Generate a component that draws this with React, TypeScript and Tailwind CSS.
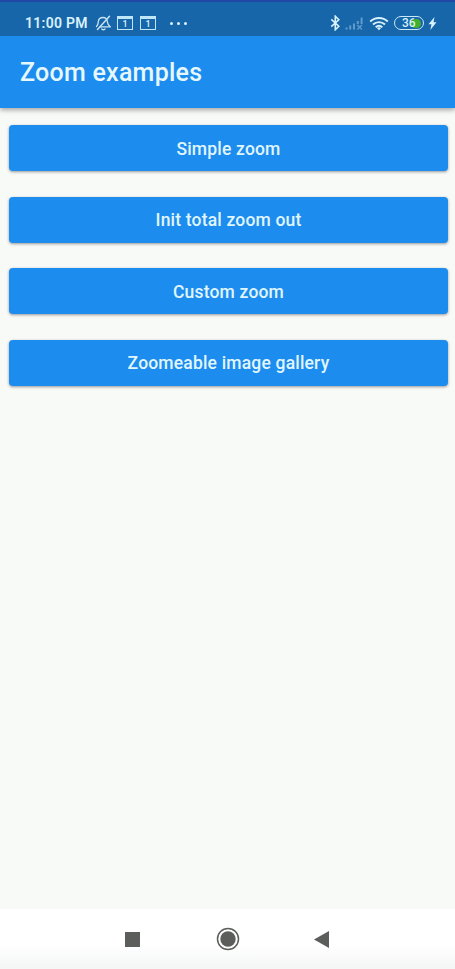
import React from "react";

const examples = [
  "Simple zoom",
  "Init total zoom out",
  "Custom zoom",
  "Zoomeable image gallery",
];

function BellOff() {
  return (
    <svg className="ml-[6px] h-4 w-[17px] opacity-90" viewBox="0 0 17 16" fill="none" stroke="currentColor" strokeWidth="1.3" strokeLinecap="round" strokeLinejoin="round">
      <path d="M1.500 11.500c1.800-1.400 1.600-3 1.800-5C3.600 4 5.500 2.500 8 2.500s4 1.700 4.300 4c.3 2.200.3 3.600 3 5.300H5" />
      <path d="M6.800 14c.9.900 2.300.900 3.200 0" />
      <path d="M14.500 1.200 2.500 14.500" strokeWidth="1.500" />
    </svg>
  );
}

function CalendarIcon() {
  return (
    <span className="flex h-[14px] w-4 items-center justify-center border border-t-[3px] border-[#bfe6f8] text-[9px] leading-none font-medium">
      1
    </span>
  );
}

function Bluetooth() {
  return (
    <svg className="h-4 w-[11px]" viewBox="0 0 11 16" fill="none" stroke="currentColor" strokeWidth="1.6">
      <path d="m1.300 4.300 7.500 6.900-3.500 3.500V1.300l3.500 3.500-7.500 6.900" />
    </svg>
  );
}

function Signal() {
  return (
    <svg className="ml-1 h-[15px] w-[19px] text-[#5f9ccb]" viewBox="0 0 19 15" fill="currentColor">
      <path d="M.5 11.500h2v2h-2zM4.200 9.500h2v4h-2zM8 7.500h2v6H8zM11.800 5h2v3h-2zM15.600 1.500h2v6.500h-2z" />
      <path d="m12.300 9 4.700 4.500m0-4.500-4.700 4.500" stroke="currentColor" strokeWidth="1.400" />
    </svg>
  );
}

function Wifi() {
  return (
    <svg className="ml-[5px] h-[15px] w-[20px]" viewBox="0 0 20 15" fill="none" stroke="currentColor" strokeWidth="1.900">
      <path d="M1.200 5.500c5-4.700 12.600-4.700 17.600 0M4 8.500c3.500-3.200 8.500-3.200 12 0M6.700 11.200c1.900-1.700 4.700-1.700 6.600 0" />
      <path d="m7.900 12 2.100 2.200L12.100 12c-1.200-1-3-1-4.200 0z" fill="currentColor" stroke="none" />
    </svg>
  );
}

function Battery() {
  return (
    <span className="ml-[5px] flex h-[14px] w-[30px] items-center rounded-full border-[1.5px] border-[#c9e8fa] p-px">
      <span className="relative flex h-full w-full items-center justify-end pr-px">
        <span className="h-[9px] w-[10px] rounded-full bg-[#43b02c]" />
        <span className="absolute left-[6px] text-[12px] leading-none font-medium">36</span>
      </span>
    </span>
  );
}

export default function App() {
  return (
    <div className="flex h-[969px] w-[455px] flex-col overflow-hidden bg-[#f8faf8] font-['Roboto',sans-serif]">
      <header className="z-10 bg-[#1c8cee] shadow-[0_2px_5px_rgba(0,0,0,0.35)]">
        <div className="flex h-9 items-center justify-between border-t-2 border-[#2148a4] bg-[#1866aa] pt-[8px] pr-[18px] pl-[25px] text-[#d9f2fc]">
          <div className="flex items-center">
            <span className="w-[64px] text-[14px] leading-4 font-semibold tracking-[0.3px] whitespace-nowrap">11:00 PM</span>
            <BellOff />
            <span className="ml-[5px] flex gap-[7px]">
              <CalendarIcon />
              <CalendarIcon />
            </span>
            <span className="ml-[14px] flex gap-1">
              <i className="size-[3px] rounded-full bg-current" />
              <i className="size-[3px] rounded-full bg-current" />
              <i className="size-[3px] rounded-full bg-current" />
            </span>
          </div>
          <div className="flex items-center">
            <Bluetooth />
            <Signal />
            <Wifi />
            <Battery />
            <svg className="ml-[4px] h-[13px] w-[9px]" viewBox="0 0 9 13" fill="currentColor">
              <path d="M6.500 0 .5 7.300h3L2.300 13 8.500 5.300h-3z" />
            </svg>
          </div>
        </div>
        <h1 className="flex h-[72px] items-center pt-0.5 pl-[20px] text-[25px] font-medium tracking-[0.25px] text-[#e6f8fd]">Zoom examples</h1>
      </header>

      <main className="flex flex-1 flex-col gap-[25.500px] pt-[17px] pr-[7px] pl-[9px]">
        {examples.map((label) => (
          <button
            key={label}
            className="flex h-[46px] shrink-0 items-center justify-center rounded-[4px] bg-[#1c8cee] pt-[2px] text-[17.500px] font-medium tracking-[0.18px] text-[#e0f6fd] shadow-[0_1px_3px_rgba(0,0,0,0.4)]"
          >
            {label}
          </button>
        ))}
      </main>

      <nav className="flex h-[60px] items-center bg-linear-to-b from-[#fefffe] from-60% to-[#f4f6f5] pl-[125px] text-[#5c5e5b]">
        <span className="size-[15px] bg-current" />
        <svg className="ml-[76px] size-6" viewBox="0 0 24 24" fill="none" stroke="currentColor">
          <circle cx="12" cy="12" r="10.500" strokeWidth="1.500" />
          <circle cx="12" cy="12" r="7.700" fill="currentColor" stroke="none" />
        </svg>
        <svg className="ml-[74px] h-[17px] w-[15px]" viewBox="0 0 15 17" fill="currentColor">
          <path d="M0 8.500 15 0v17z" />
        </svg>
      </nav>
    </div>
  );
}
